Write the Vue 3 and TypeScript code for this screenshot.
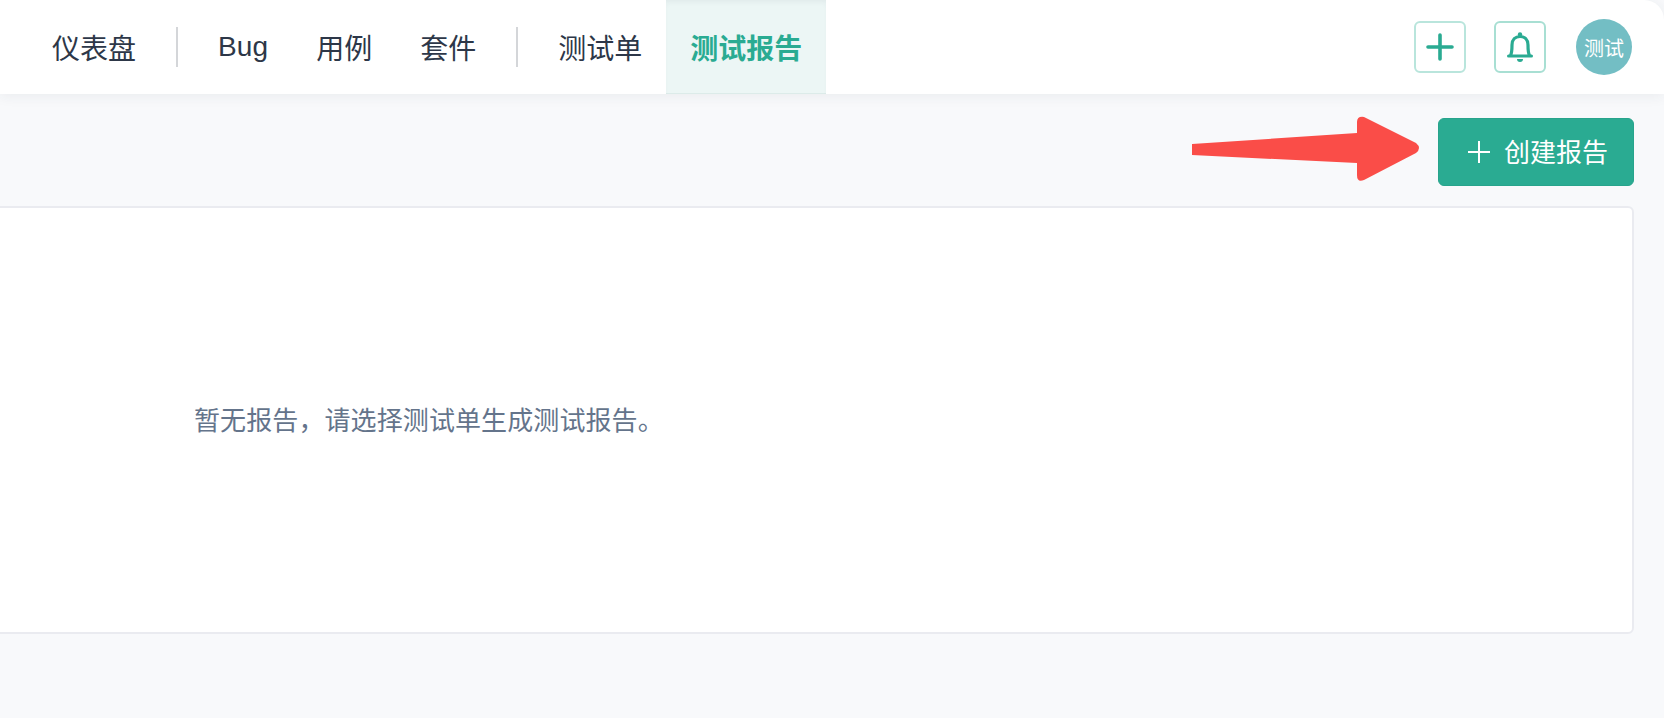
<template>
  <div class="page">
    <header class="topbar">
      <nav class="nav">
        <template v-for="(item, i) in navItems" :key="i">
          <span v-if="item === '|'" class="divider"></span>
          <a v-else class="nav-item" :class="{ active: item === activeItem, latin: item === 'Bug' }">{{ item }}</a>
        </template>
      </nav>
      <div class="actions">
        <button class="icon-btn light">
          <svg width="28" height="28" viewBox="0 0 28 28">
            <path d="M14 2v24M2 14h24" stroke="#2aab92" stroke-width="3.6" stroke-linecap="round" fill="none" />
          </svg>
        </button>
        <button class="icon-btn">
          <svg width="26" height="30" viewBox="0 0 26 30">
            <path
              d="M3.5 23.5C5 21 5 18 5 13C5 7.5 8.5 4.5 13 4.5S21 7.5 21 13C21 18 21 21 22.5 23.5"
              stroke="#2aab92"
              stroke-width="3.2"
              fill="none"
            />
            <path d="M1.5 24h23" stroke="#2aab92" stroke-width="3" stroke-linecap="round" fill="none" />
            <circle cx="13" cy="2.5" r="2.2" fill="#2aab92" />
            <path d="M10 27h6a3 3 0 0 1-6 0z" fill="#2aab92" />
          </svg>
        </button>
        <div class="avatar">测试</div>
      </div>
    </header>

    <main class="content">
      <div class="toolbar">
        <svg class="arrow" width="232" height="67" viewBox="0 0 232 67">
          <path
            d="M2 28L167 17V6Q167 0 174 1L226 27Q232 32 226 37L174 64Q167 67 167 59V47L2 39Z"
            fill="#fa4d48"
          />
        </svg>
        <button class="create-btn">
          <svg width="22" height="22" viewBox="0 0 22 22">
            <path d="M11 0v22M0 11h22" stroke="#fff" stroke-width="2" fill="none" />
          </svg>
          <span>创建报告</span>
        </button>
      </div>
      <section class="card">
        <p class="empty">暂无报告，请选择测试单生成测试报告。</p>
      </section>
    </main>
  </div>
</template>

<script setup lang="ts">
const navItems: string[] = ['仪表盘', '|', 'Bug', '用例', '套件', '|', '测试单', '测试报告']
const activeItem = '测试报告'
</script>

<style>
html,
body {
  margin: 0;
  background: #f8f9fb;
  overflow: hidden;
}
</style>

<style scoped>
.page {
  width: 1664px;
  height: 718px;
  overflow: hidden;
  background: #f8f9fb;
  font-family: "Liberation Sans", "Noto Sans CJK SC", sans-serif;
}

.topbar {
  display: flex;
  align-items: center;
  justify-content: space-between;
  height: 94px;
  padding: 0 32px 0 28px;
  background: #fff;
  border-top-right-radius: 20px;
  box-shadow: 0 2px 14px rgba(45, 55, 72, 0.07);
  position: relative;
}

.nav {
  display: flex;
  align-items: center;
  height: 100%;
}

.nav-item {
  display: flex;
  align-items: center;
  height: 100%;
  padding: 0 24px;
  font-size: 28px;
  color: #2d3748;
}

.nav-item.latin {
  letter-spacing: 0.1px;
}

.nav-item.active {
  color: #2aab92;
  font-weight: 700;
  background: #ecf6f5;
  box-shadow: inset 0 4px 6px -3px rgba(45, 55, 72, 0.08), inset 0 -1px 0 #dcebe9;
}

.divider {
  width: 2px;
  height: 40px;
  margin: 0 16px;
  background: #d4d6d9;
}

.actions {
  display: flex;
  align-items: center;
  gap: 30px;
}

.icon-btn {
  display: flex;
  align-items: center;
  justify-content: center;
  width: 52px;
  height: 52px;
  padding: 0;
  background: #fff;
  border: 2px solid #a8dfd3;
  border-radius: 6px;
}

.icon-btn.light {
  margin-right: -2px;
  border-color: #b9e5dc;
}

.avatar {
  display: flex;
  align-items: center;
  justify-content: center;
  width: 56px;
  height: 56px;
  border-radius: 50%;
  background: #73bec4;
  color: #fff;
  font-size: 20px;
}

.content {
  padding: 24px 30px 0 0;
}

.toolbar {
  display: flex;
  justify-content: flex-end;
  align-items: center;
  gap: 16px;
  height: 68px;
}

.arrow {
  flex: none;
  margin-top: -5px;
}

.create-btn {
  display: flex;
  align-items: center;
  gap: 14px;
  width: 196px;
  height: 68px;
  padding: 0 0 4px 29px;
  background: #2aab92;
  border: 1px solid #27a48c;
  border-radius: 6px;
  color: #fff;
  font-family: inherit;
  font-size: 26px;
}

.create-btn svg {
  margin-top: 4px;
}

.card {
  display: flex;
  align-items: center;
  height: 428px;
  margin: 20px 0 0 -20px;
  padding: 0 0 4px 212px;
  background: #fff;
  border: 2px solid #eaebf0;
  border-radius: 6px;
  box-sizing: border-box;
}

.empty {
  margin: 0;
  font-size: 26px;
  letter-spacing: 0.1px;
  color: #64748b;
}
</style>
